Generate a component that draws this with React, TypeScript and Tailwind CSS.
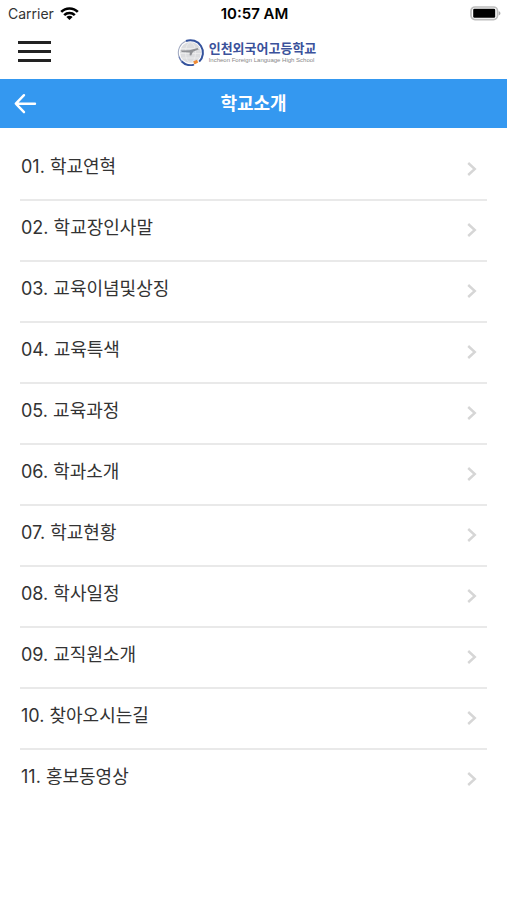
const menuItems = [
  "학교연혁",
  "학교장인사말",
  "교육이념및상징",
  "교육특색",
  "교육과정",
  "학과소개",
  "학교현황",
  "학사일정",
  "교직원소개",
  "찾아오시는길",
  "홍보동영상",
];

function StatusBar() {
  return (
    <div className="grid h-7 grid-cols-[1fr_auto_1fr] items-center pr-1.5 pl-2 text-sm text-black">
      <div className="flex items-center gap-1.5 text-[#333]">
        <span>Carrier</span>
        <svg width="19" height="14" viewBox="0 0 19 14" fill="none" stroke="#000" strokeWidth="2.6" aria-hidden="true">
          <path d="M1.2 4.9C5.7 0.3 13.3 0.3 17.8 4.9" />
          <path d="M4.2 8.1C7.1 5.3 11.9 5.3 14.8 8.1" />
          <path d="M9.5 13.1L6.4 10C8 8.4 11 8.4 12.6 10Z" fill="#000" stroke="none" />
        </svg>
      </div>
      <span className="text-center text-[15px] leading-5 font-semibold">10:57 AM</span>
      <svg className="justify-self-end" width="31" height="16" viewBox="0 0 31 16" aria-hidden="true">
        <rect x="1" y="1" width="26.5" height="12.6" rx="4" fill="#fff" stroke="#bdbdbd" strokeWidth="1.7" />
        <rect x="3.2" y="2.8" width="22" height="9" rx="1.2" fill="#000" />
        <path d="M28.7 5.2C31 5.8 31 8.8 28.7 9.4Z" fill="#aaa" />
      </svg>
    </div>
  );
}

function SchoolLogo() {
  return (
    <a href="#" className="flex items-center gap-1">
      <svg width="28" height="28" viewBox="0 0 28 28" fill="none" aria-hidden="true">
        <circle cx="13.5" cy="14.5" r="10.5" fill="#dcdddf" />
        <g stroke="#f0f0f1" strokeWidth="0.7">
          <ellipse cx="13.5" cy="14.5" rx="5" ry="10" />
          <path d="M4 10.5H23M3 15.5H24M5 20H22" />
        </g>
        <path d="M2 18.5A12.5 12.5 0 0 1 9 3" stroke="#a3abc2" strokeWidth="1.1" />
        <path d="M9 3A12.5 12.5 0 0 1 22.2 23.6" stroke="#34529c" strokeWidth="2" />
        <path d="M17 26.6A12.5 12.5 0 0 1 4.5 23.2" stroke="#34529c" strokeWidth="2" />
        <path d="M4.5 23.2A12.5 12.5 0 0 1 2 18.5" stroke="#6c7fb3" strokeWidth="1.4" />
        <path d="M3.5 12.6L12.5 12.2L20.5 10L21.8 11.2L16 13.8L14.2 17.4L12.6 17.2L12.8 14.4L5 14Z" fill="#8f9195" />
        <path d="M16.2 23.4L20 21.8L21.2 24.6L17.5 26.6Z" fill="#ee8a35" />
      </svg>
      <span className="flex flex-col">
        <span className="text-[13px] leading-4 font-bold text-[#3b529b]">인천외국어고등학교</span>
        <span className="font-['Liberation_Sans',sans-serif] text-[6px] leading-2 text-[#888]">
          Incheon Foreign Language High School
        </span>
      </span>
    </a>
  );
}

export default function App() {
  return (
    <div className="min-h-screen bg-white font-[Inter,'Noto_Sans_CJK_KR',sans-serif]">
      <StatusBar />
      <header className="grid h-[51px] grid-cols-[1fr_auto_1fr] items-center pr-8 pb-1 pl-[18px]">
        <button type="button" aria-label="메뉴" className="flex w-[33px] flex-col gap-1.5">
          <span className="h-[3px] w-full bg-[#222]" />
          <span className="h-[3px] w-full bg-[#222]" />
          <span className="h-[3px] w-full bg-[#222]" />
        </button>
        <SchoolLogo />
      </header>

      <div className="grid h-[49px] grid-cols-[1fr_auto_1fr] items-center bg-[#3498f0] px-3.5 text-white">
        <button type="button" aria-label="뒤로" className="w-6">
          <svg width="23" height="22" viewBox="0 0 23 22" fill="none" stroke="currentColor" strokeWidth="2.4" strokeLinecap="round" strokeLinejoin="round" aria-hidden="true">
            <path d="M10 2.2L1.8 10.7L10 19.2M2 10.7H21" />
          </svg>
        </button>
        <h1 className="text-lg leading-6 font-bold">학교소개</h1>
      </div>

      <ul className="px-5 pt-3">
        {menuItems.map((item, i) => (
          <li key={item} className="border-b-2 border-[#e9e9e9] last:border-b-0">
            <a href="#" className="flex h-[59px] items-center justify-between pr-2.5 pl-px text-lg leading-6 text-[#333]">
              <span className="pb-1.5">
                {String(i + 1).padStart(2, "0")}. {item}
              </span>
              <svg width="10" height="16" viewBox="0 0 10 16" fill="none" stroke="#d6d6d6" strokeWidth="2.4" aria-hidden="true">
                <path d="M1.2 1L7.8 7L1.2 13" />
              </svg>
            </a>
          </li>
        ))}
      </ul>
    </div>
  );
}
